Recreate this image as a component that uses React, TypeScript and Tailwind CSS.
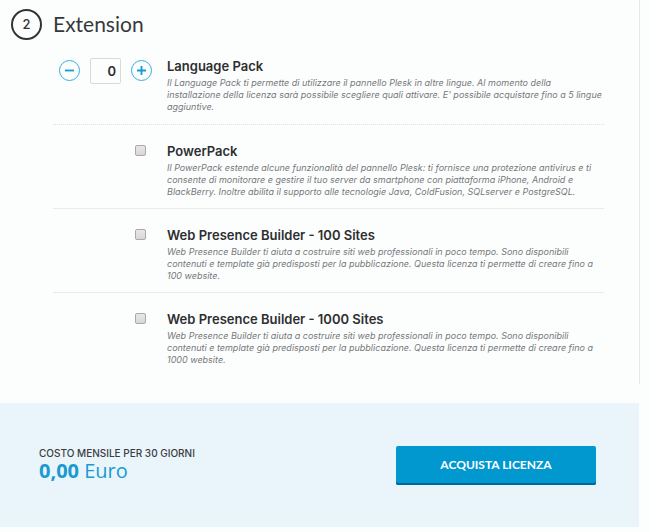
import React, { useState } from 'react';

type Extension = {
  id: string;
  name: string;
  description: string[];
};

const languagePack: Extension = {
  id: 'language-pack',
  name: 'Language Pack',
  description: [
    'Il Language Pack ti permette di utilizzare il pannello Plesk in altre lingue. Al momento della',
    "installazione della licenza sarà possibile scegliere quali attivare. E' possibile acquistare fino a 5 lingue",
    'aggiuntive.',
  ],
};

const extensions: Extension[] = [
  {
    id: 'powerpack',
    name: 'PowerPack',
    description: [
      'Il PowerPack estende alcune funzionalità del pannello Plesk: ti fornisce una protezione antivirus e ti',
      'consente di monitorare e gestire il tuo server da smartphone con piattaforma iPhone, Android e',
      'BlackBerry. Inoltre abilita il supporto alle tecnologie Java, ColdFusion, SQLserver e PostgreSQL.',
    ],
  },
  {
    id: 'wpb-100',
    name: 'Web Presence Builder - 100 Sites',
    description: [
      'Web Presence Builder ti aiuta a costruire siti web professionali in poco tempo. Sono disponibili',
      'contenuti e template già predisposti per la pubblicazione. Questa licenza ti permette di creare fino a',
      '100 website.',
    ],
  },
  {
    id: 'wpb-1000',
    name: 'Web Presence Builder - 1000 Sites',
    description: [
      'Web Presence Builder ti aiuta a costruire siti web professionali in poco tempo. Sono disponibili',
      'contenuti e template già predisposti per la pubblicazione. Questa licenza ti permette di creare fino a',
      '1000 website.',
    ],
  },
];

function ExtensionText({ item }: { item: Extension }) {
  return (
    <div className="min-w-0 flex-1">
      <label htmlFor={item.id} className="block text-[13px] leading-5 font-semibold text-[#2e2e30]">
        {item.name}
      </label>
      <p className="mt-px text-[9px] leading-3 whitespace-nowrap text-[#77777a] italic">
        {item.description.map((line) => (
          <span key={line} className="block">
            {line}
          </span>
        ))}
      </p>
    </div>
  );
}

function StepButton({ label, plus, onClick }: { label: string; plus?: boolean; onClick: () => void }) {
  return (
    <button
      type="button"
      aria-label={label}
      onClick={onClick}
      className="flex h-[21px] w-[21px] shrink-0 items-center justify-center rounded-full border border-[#35ace0] text-[#0f9bd4]"
    >
      <svg className="h-[9px] w-[9px]" viewBox="0 0 9 9" stroke="currentColor" strokeWidth={1.8}>
        <path d={plus ? 'M0 4.5h9M4.5 0v9' : 'M0 4.5h9'} />
      </svg>
    </button>
  );
}

function App() {
  const [languages, setLanguages] = useState(0);

  return (
    <div className="min-h-screen bg-[#fcfefe] pr-[10px] font-['Inter',sans-serif]">
      {/* Extensions */}
      <section className="border-r border-[#e6e8e8] pt-[9px] pb-2">
        <div className="flex items-center gap-[11px] pl-[11px]">
          <span className="flex h-[31px] w-[31px] items-center justify-center rounded-full border-2 border-[#333] text-[13px] font-medium text-[#333]">
            2
          </span>
          <h2 className="pb-[2px] font-['Lato',sans-serif] text-[21px] leading-6 text-[#38383a]">Extension</h2>
        </div>

        <div className="mr-[35px] ml-[53px]">
          <div className="flex border-b border-dotted border-[#dfe1e1] pt-4 pb-[11px]">
            <div className="flex w-[114px] shrink-0 items-start justify-end gap-[10px] pr-[15px]">
              <div className="pt-1">
                <StepButton label="Diminuisci" onClick={() => setLanguages(Math.max(0, languages - 1))} />
              </div>
              <input
                id={languagePack.id}
                type="text"
                inputMode="numeric"
                value={languages}
                onChange={(e) => setLanguages(Number(e.target.value) || 0)}
                className="mt-[2px] h-[26px] w-[31px] shrink-0 rounded-xs border border-[#dcd8da] bg-[#fcfdfd] pr-1 text-right text-[13px] font-semibold text-[#2e2e30]"
              />
              <div className="pt-1">
                <StepButton label="Aumenta" plus onClick={() => setLanguages(languages + 1)} />
              </div>
            </div>
            <ExtensionText item={languagePack} />
          </div>

          {extensions.map((item) => (
            <div key={item.id} className="flex border-b border-[#e8ebeb] pt-4 pb-[10px] last:border-b-0">
              <div className="flex w-[114px] shrink-0 items-start justify-end pt-1 pr-[21px]">
                <input
                  id={item.id}
                  type="checkbox"
                  className="h-[11px] w-[11px] appearance-none rounded-xs border border-[#aaa8a9] bg-linear-to-b from-[#e9e7e8] to-[#d9d7d8] checked:bg-[#0f9bd4] checked:bg-none"
                />
              </div>
              <ExtensionText item={item} />
            </div>
          ))}
        </div>
      </section>

      {/* Total */}
      <footer className="mt-[19px] mr-px flex h-[124px] items-center justify-between rounded-br-xs bg-[#e9f5fb] pr-[43px] pl-[39px]">
        <div className="pb-1">
          <p className="text-[10px] leading-4 font-medium text-[#3c3c3e]">COSTO MENSILE PER 30 GIORNI</p>
          <p className="font-['Open_Sans',sans-serif] text-xl leading-5 text-[#1a9ad0]">
            <strong className="font-bold">0,00</strong> Euro
          </p>
        </div>
        <button
          type="button"
          className="h-[39px] w-[200px] rounded-xs bg-[#0098cf] font-['Lato',sans-serif] text-xs font-bold text-white shadow-[inset_0_-2px_0_#00699c]"
        >
          ACQUISTA LICENZA
        </button>
      </footer>
    </div>
  );
}

export default App;
